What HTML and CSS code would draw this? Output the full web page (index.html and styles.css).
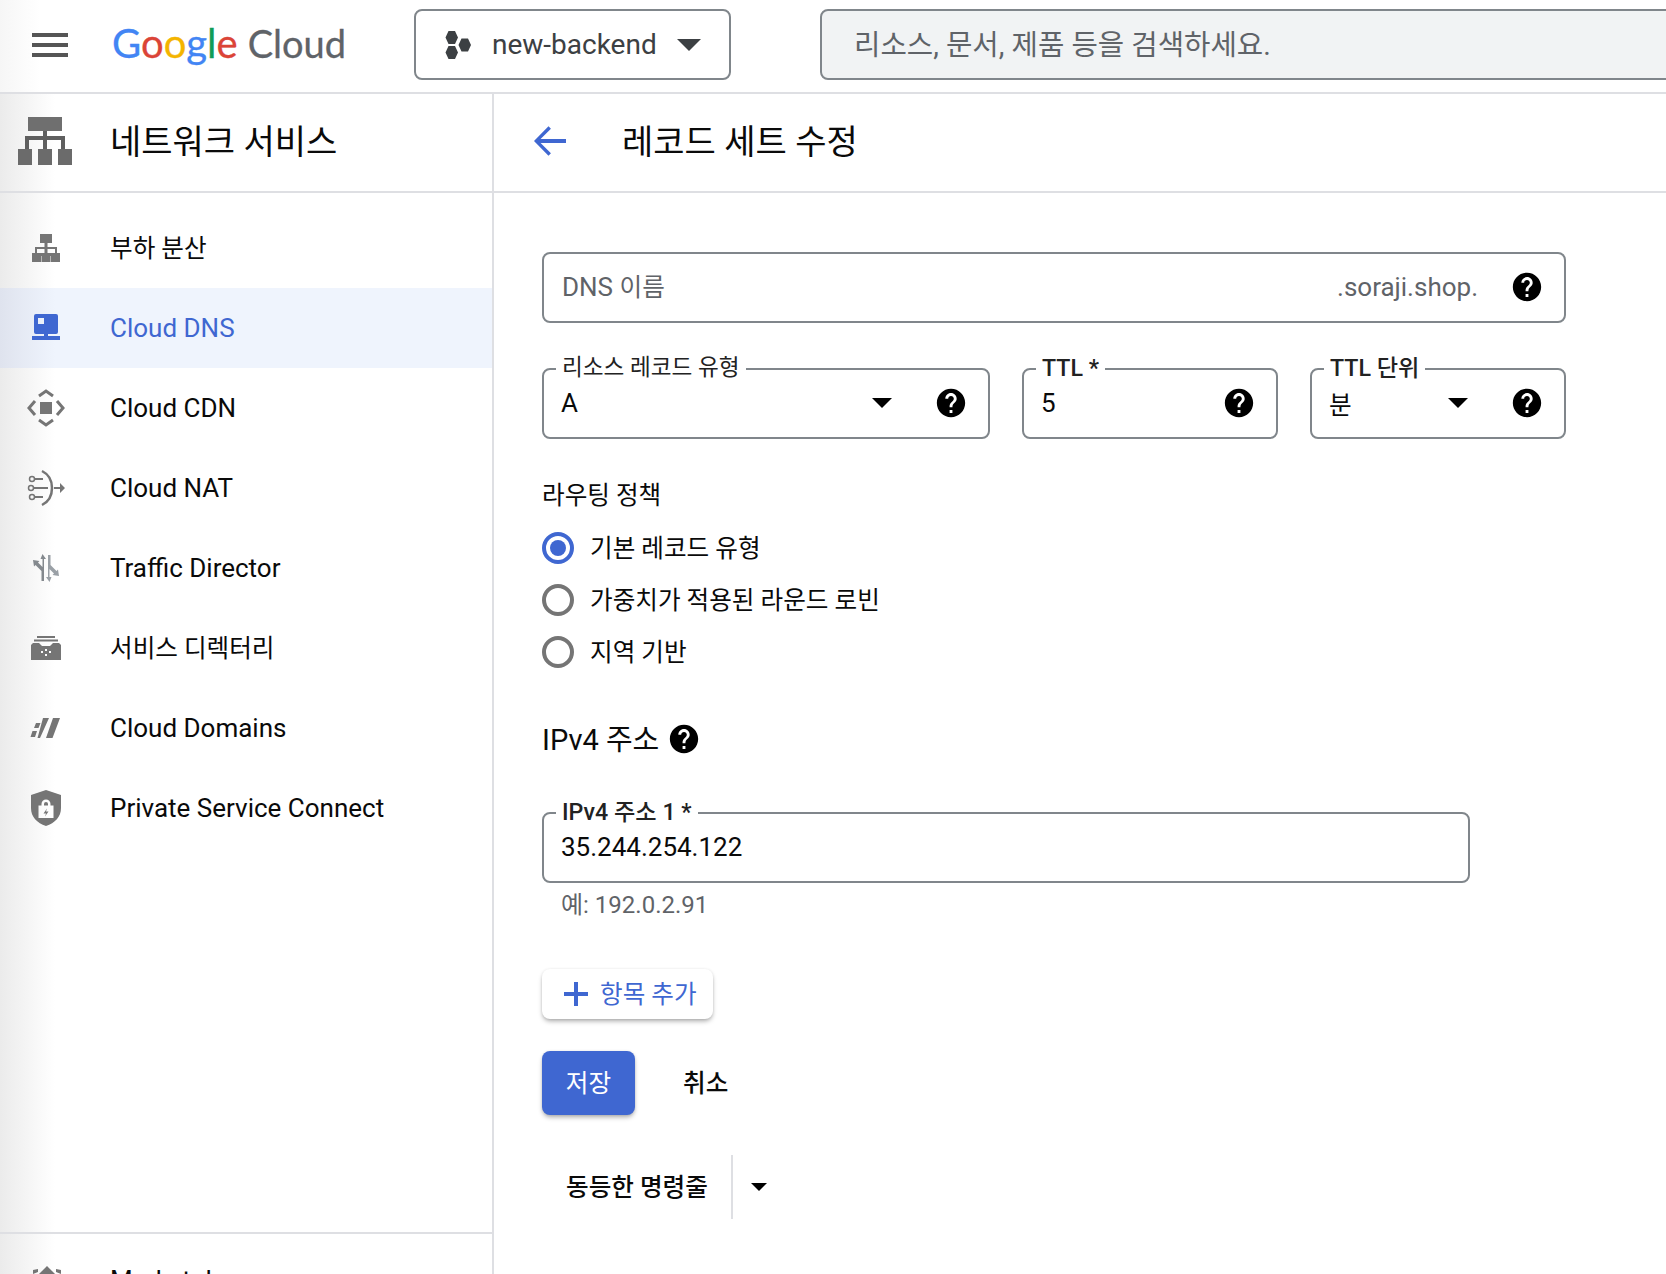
FILE: index.html
```html
<!DOCTYPE html>
<html lang="ko">
<head>
  <meta charset="UTF-8">
  <title>레코드 세트 수정</title>
  <link rel="stylesheet" href="styles.css">
</head>
<body>

  <svg class="defs" aria-hidden="true">
    <symbol id="help" viewBox="0 0 24 24"><path d="M12 2C6.48 2 2 6.48 2 12s4.48 10 10 10 10-4.48 10-10S17.52 2 12 2zm1 17h-2v-2h2v2zm2.07-7.75l-.9.92C13.45 12.9 13 13.5 13 15h-2v-.5c0-1.1.45-2.1 1.17-2.83l1.24-1.26c.37-.36.59-.86.59-1.41 0-1.1-.9-2-2-2s-2 .9-2 2H8c0-2.21 1.79-4 4-4s4 1.79 4 4c0 .88-.36 1.68-.93 2.25z"/></symbol>
  </svg>

  <!-- Top bar -->
  <header class="topbar">
    <svg class="menu-icon" viewBox="0 0 36 24"><path d="M0 0h36v4H0zM0 10h36v4H0zM0 20h36v4H0z"/></svg>
    <div class="logo"><span class="g-blue">G</span><span class="g-red">o</span><span class="g-yellow">o</span><span class="g-blue">g</span><span class="g-green">l</span><span class="g-red">e</span><span class="logo-cloud">Cloud</span></div>
    <div class="picker">
      <svg class="picker-icon" viewBox="0 0 27 28"><path d="M3.500 0h6.500l3 6.500-3 6.500H3.500L.500 6.500zM3.500 15h6.500l3 6.500-3 6.500H3.500L.500 21.500zM16.500 7.500h6.500l3 6.500-3 6.500h-6.500l-3-6.500z"/></svg>
      <span class="picker-name">new-backend</span>
      <span class="caret caret-lg"></span>
    </div>
    <div class="search">리소스, 문서, 제품 등을 검색하세요.</div>
  </header>

  <div class="layout">
    <!-- Left nav -->
    <aside class="sidebar">
      <div class="side-head">
        <svg class="side-head-icon" viewBox="0 0 54 48"><path d="M10 0h34v14H10z" fill="#6f6f6f"/><path d="M25 14h4v5h18v13h-4v-9H29v9h-4v-9H11v9H7V19h18z" fill="#5f5f5f"/><path d="M0 32h14v16H0zM20 32h14v16H20zM40 32h14v16H40z" fill="#6b6b6b"/></svg>
        <h1 class="side-title">네트워크 서비스</h1>
      </div>
      <nav class="side-nav">
        <a class="nav-item">
          <svg class="nav-icon" viewBox="0 0 40 40"><path d="M14 6h12v9h-4.500v4H31v6h3v9H24.500v-9H29v-4h-7.500v4H24v9h-8v-9h2.500v-4H11v4h4.500v9H6v-9h3v-6h9.500v-4H14z"/><path d="M15 25h10v3H15z"/></svg>
          <span class="ko">부하 분산</span>
        </a>
        <a class="nav-item active">
          <svg class="nav-icon" viewBox="0 0 40 40"><path fill-rule="evenodd" d="M10 6h20a2 2 0 0 1 2 2v16a2 2 0 0 1-2 2h-8v2h-4v-2h-8a2 2 0 0 1-2-2V8a2 2 0 0 1 2-2zm2 4v6h6v-6z"/><path d="M6 28h28v4H6z"/></svg>
          Cloud DNS
        </a>
        <a class="nav-item">
          <svg class="nav-icon" viewBox="0 0 40 40"><path d="M14 14h12v12H14z"/><path d="M9 13l-6 7 6 7M31 13l6 7-6 7M13 8l7-5 7 5M13 32l7 5 7-5" fill="none" stroke="#757575" stroke-width="3"/></svg>
          Cloud CDN
        </a>
        <a class="nav-item">
          <svg class="nav-icon" viewBox="0 0 40 40"><path d="M16 3c8 4 10 10 10 17s-2 13-10 17" fill="none" stroke="#757575" stroke-width="2.500"/><path d="M8 11h9M8 20h14M8 29h9" fill="none" stroke="#757575" stroke-width="2"/><circle cx="6" cy="11" r="2.500" fill="none" stroke="#757575" stroke-width="1.500"/><circle cx="5" cy="20" r="2.500" fill="none" stroke="#757575" stroke-width="1.500"/><circle cx="6" cy="29" r="2.500" fill="none" stroke="#757575" stroke-width="1.500"/><path d="M28 19h6v-4l5 5-5 5v-4h-6z"/></svg>
          Cloud NAT
        </a>
        <a class="nav-item">
          <svg class="nav-icon" viewBox="0 0 40 40"><path d="M16.500 6l3.500 5h-2v22h-2.500V23l-6-6-1.500 1.500-1-6.500 6.500 1-1.500 1.500 4.500 4.500V11h-2z" fill="#84898e"/><path d="M23.500 34l-3.500-5h2V7h2.500v10l6 6 1.500-1.500 1 6.500-6.500-1 1.500-1.500-4.500-4.500V29h2z" fill="#9aa0a6"/></svg>
          Traffic Director
        </a>
        <a class="nav-item">
          <svg class="nav-icon" viewBox="0 0 40 40"><path d="M11 8h18v2H11zM8 11.500h24v2H8z"/><path fill-rule="evenodd" d="M7 15h6l3 3h8l3-3h6l2 2v15H5V17zm12 6v2h2v-2zm-4 2v2h2v-2zm8 0v2h2v-2zm-4 3v2h2v-2z"/></svg>
          <span class="ko">서비스 디렉터리</span>
        </a>
        <a class="nav-item">
          <svg class="nav-icon" viewBox="0 0 40 40"><path d="M10 15h4.500l-2 5H8zM6.500 23H11l-2 6H4.500zM17 10h6l-9 20h-2.500zM27 10h7l-7.500 20H20z"/></svg>
          Cloud Domains
        </a>
        <a class="nav-item">
          <svg class="nav-icon" viewBox="0 0 40 40"><path fill-rule="evenodd" d="M20 2l15 5v13c0 9-6 15-15 18C11 35 5 29 5 20V7zm-4.500 14v1.500H12.500V30h15V17.500h-3V16a4.500 4.500 0 0 0-9 0zm2.500 0a2 2 0 0 1 4 0v1.500h-4zm3 4.500l-3.500 5h2.500l-1 3 3.500-5h-2.500z"/></svg>
          Private Service Connect
        </a>
      </nav>
      <div class="side-foot">
        <a class="nav-item nav-foot">
          <svg class="nav-icon" viewBox="0 0 40 40"><path d="M21 6l8 8H13zM7 10l5-1v3l-5 2zM35 10l-5-1v3l5 2z"/></svg>
          Marketplace
        </a>
      </div>
    </aside>

    <!-- Content -->
    <main class="content">
      <div class="page-head">
        <svg class="back-icon" viewBox="0 0 34 32"><path d="M34 14H7L18 3l-2.600-2.600L0 16l15.400 15.600L18 29 7 18h27z"/></svg>
        <h1 class="page-title">레코드 세트 수정</h1>
      </div>

      <form class="form">
        <div class="field">
          <span class="placeholder">DNS <span class="ko-inline">이름</span></span>
          <span class="suffix">.soraji.shop.</span>
          <svg class="help"><use href="#help"/></svg>
        </div>

        <div class="field-row">
          <div class="field field-type">
            <span class="float-label">리소스 레코드 유형</span>
            <span class="value">A</span>
            <span class="caret caret-field"></span>
            <svg class="help"><use href="#help"/></svg>
          </div>
          <div class="field field-ttl">
            <span class="float-label label-strong">TTL *</span>
            <span class="value">5</span>
            <svg class="help"><use href="#help"/></svg>
          </div>
          <div class="field field-unit">
            <span class="float-label label-strong">TTL 단위</span>
            <span class="value ko-inline">분</span>
            <span class="caret caret-field"></span>
            <svg class="help"><use href="#help"/></svg>
          </div>
        </div>

        <div class="group-title">라우팅 정책</div>
        <div class="radios">
          <div class="radio-row"><span class="radio checked"></span><span class="ko">기본 레코드 유형</span></div>
          <div class="radio-row"><span class="radio"></span><span class="ko">가중치가 적용된 라운드 로빈</span></div>
          <div class="radio-row"><span class="radio"></span><span class="ko">지역 기반</span></div>
        </div>

        <div class="section-title"><span class="section-text">IPv4 주소</span> <svg class="help"><use href="#help"/></svg></div>

        <div class="field field-ip">
          <span class="float-label label-strong">IPv4 주소 1 *</span>
          <span class="value">35.244.254.122</span>
        </div>
        <div class="hint">예: 192.0.2.91</div>

        <button type="button" class="btn-add">
          <svg class="plus-icon" viewBox="0 0 24 24"><path d="M10 0h4v10h10v4H14v10h-4V14H0v-4h10z"/></svg>
          <span class="ko">항목 추가</span>
        </button>

        <div class="actions">
          <button type="button" class="btn-save"><span class="ko">저장</span></button>
          <button type="button" class="btn-cancel"><span class="ko">취소</span></button>
        </div>

        <div class="command">
          <span class="ko">동등한 명령줄</span>
          <span class="command-sep"></span>
          <span class="caret caret-sm"></span>
        </div>
      </form>
    </main>
  </div>

</body>
</html>
```

FILE: styles.css
```css
:root {
  --blue: #3f67d1;
  --line: #dedfe3;
  --outline: #80868b;
  --grey: #5f6368;
  --icon: #757575;
  --text: #0a0a0a;
}
* {
  box-sizing: border-box;
}
html, body {
  margin: 0;
  height: 1274px;
  overflow: hidden;
}
body {
  background: #fff;
  color: var(--text);
  font-family: Roboto, "Noto Sans CJK KR", sans-serif;
  font-size: 26px;
}
h1 {
  margin: 0;
  font-size: 34px;
  font-weight: 400;
}
.defs {
  display: none;
}
/* korean text runs a bit narrower and sits higher than the latin */
.ko {
  display: block;
  padding-bottom: 4px;
  font-size: 24.6px;
}
.ko-inline {
  font-size: 24.6px;
}

/* top bar */
.topbar {
  display: flex;
  align-items: center;
  height: 94px;
  padding: 0 0 3px 32px;
  border-bottom: 2px solid var(--line);
  background: linear-gradient(90deg, #f6f6f6, #fff 40px);
  overflow: hidden;
}
.menu-icon {
  width: 36px;
  height: 24px;
  fill: #555;
  flex: none;
}
.logo {
  width: 302px;
  margin: 0 0 3px 44px;
  font-family: Lato, sans-serif;
  font-size: 40px;
  -webkit-text-stroke: 0.3px;
  white-space: nowrap;
  flex: none;
}
.g-blue { color: #4285f4; }
.g-red { color: #db4437; }
.g-yellow { color: #f4b400; }
.g-green { color: #0f9d58; }
.logo-cloud {
  margin-left: 10px;
  font-size: 38px;
  color: #5f6368;
}
.picker {
  display: flex;
  align-items: center;
  width: 317px;
  height: 71px;
  padding-left: 29px;
  border: 2px solid var(--outline);
  border-radius: 8px;
  flex: none;
}
.picker-icon {
  width: 27px;
  height: 28px;
  fill: #3c4043;
  flex: none;
}
.picker-name {
  margin-left: 20px;
  font-size: 28px;
  color: #3c4043;
}
.caret {
  display: block;
  border-style: solid;
  border-color: transparent;
  border-bottom-width: 0;
  flex: none;
}
.caret-lg {
  margin-left: 20px;
  border-width: 12px 12px 0;
  border-top-color: #3c4043;
}
.search {
  flex: 1;
  height: 71px;
  margin: 0 -10px 0 89px;
  padding: 0 32px;
  line-height: 68px;
  border: 2px solid var(--outline);
  border-radius: 8px;
  background: #f1f3f4;
  color: var(--grey);
  font-size: 28.7px;
}

/* layout */
.layout {
  display: flex;
  height: 1180px;
}
.sidebar {
  display: flex;
  flex-direction: column;
  width: 494px;
  border-right: 2px solid var(--line);
  background: linear-gradient(90deg, #ebebeb, #fff 55px);
  flex: none;
}
.side-head {
  display: flex;
  align-items: center;
  height: 99px;
  padding: 0 0 4px 18px;
  border-bottom: 2px solid var(--line);
}
.side-head-icon {
  width: 54px;
  height: 48px;
}
.side-title {
  margin: 0 0 2px 38px;
}
.side-nav {
  flex: 1;
  padding-top: 15px;
}
.nav-item {
  display: flex;
  align-items: center;
  height: 80px;
  padding-left: 26px;
  white-space: nowrap;
}
.nav-icon {
  width: 40px;
  height: 40px;
  margin-right: 44px;
  fill: var(--icon);
  flex: none;
}
.nav-item.active {
  background: linear-gradient(90deg, #dfe3ee, #eff4fd 55px);
  color: var(--blue);
}
.active .nav-icon {
  fill: var(--blue);
}
.side-foot {
  height: 42px;
  border-top: 2px solid var(--line);
  padding-top: 26px;
  overflow: hidden;
}
.nav-foot {
  height: 40px;
}

/* content */
.content {
  flex: 1;
  min-width: 0;
}
.page-head {
  display: flex;
  align-items: center;
  height: 99px;
  padding: 0 0 4px 40px;
  border-bottom: 2px solid var(--line);
}
.back-icon {
  width: 32px;
  height: 32px;
  fill: var(--blue);
}
.page-title {
  margin: 0 0 2px 56px;
}
.form {
  width: 1072px;
  padding: 59px 0 0 48px;
}
.field {
  position: relative;
  display: flex;
  align-items: center;
  height: 71px;
  padding: 0 20px 2px 17px;
  border: 2px solid var(--outline);
  border-radius: 8px;
}
.placeholder {
  flex: 1;
  padding: 0 0 3px 1px;
  color: var(--grey);
}
.suffix {
  margin-right: 32px;
  color: var(--grey);
}
.value {
  flex: 1;
}
.help {
  width: 34px;
  height: 34px;
  fill: #000;
  flex: none;
}
.field-row {
  display: flex;
  gap: 32px;
  margin-top: 45px;
}
.field-type { width: 448px; }
.field-ttl { width: 256px; }
.field-unit { width: 256px; }
.float-label {
  position: absolute;
  top: -17px;
  left: 12px;
  padding: 0 6px;
  background: #fff;
  font-size: 22.6px;
  line-height: 30px;
  color: #222;
}
.label-strong {
  font-size: 23.2px;
  font-weight: 500;
}
.caret-field {
  margin-right: 42px;
  border-width: 10px 10px 0;
  border-top-color: #000;
}
.group-title {
  margin-top: 39px;
  line-height: 36px;
  font-size: 24.6px;
}
.radios {
  margin-top: 8px;
}
.radio-row {
  display: flex;
  align-items: center;
  gap: 16px;
  height: 52px;
}
.radio {
  width: 32px;
  height: 32px;
  padding: 4px;
  border: 4px solid var(--icon);
  border-radius: 50%;
  flex: none;
}
.radio.checked {
  border-color: var(--blue);
}
.radio.checked::after {
  content: '';
  display: block;
  width: 16px;
  height: 16px;
  border-radius: 50%;
  background: var(--blue);
}
.section-title {
  display: flex;
  align-items: center;
  gap: 8px;
  height: 40px;
  margin-top: 41px;
  font-size: 29px;
}
.section-text {
  padding-bottom: 4px;
}
.field-ip {
  width: 928px;
  margin-top: 53px;
}
.hint {
  margin: 7px 0 0 19px;
  line-height: 30px;
  font-size: 24px;
  color: var(--grey);
}
button {
  font: inherit;
  border: none;
  cursor: pointer;
}
.btn-add {
  display: flex;
  align-items: center;
  gap: 12px;
  height: 50px;
  margin-top: 49px;
  padding: 0 16px 0 22px;
  border-radius: 8px;
  background: #fff;
  color: var(--blue);
  box-shadow: 0 3px 5px -1px rgba(0,0,0,0.35), 0 0 3px rgba(0,0,0,0.08);
}
.plus-icon {
  width: 24px;
  height: 24px;
  fill: var(--blue);
}
.actions {
  display: flex;
  align-items: center;
  margin-top: 32px;
}
.btn-save {
  width: 93px;
  height: 64px;
  border-radius: 8px;
  background: var(--blue);
  color: #fff;
  box-shadow: 0 3px 5px -1px rgba(0,0,0,0.35), 0 0 3px rgba(0,0,0,0.08);
}
.btn-cancel {
  margin-left: 48px;
  padding: 0;
  background: none;
  color: var(--text);
  font-weight: 500;
}
.command {
  display: flex;
  align-items: center;
  height: 64px;
  margin-top: 40px;
  padding-left: 24px;
  font-weight: 500;
}
.command-sep {
  width: 2px;
  height: 64px;
  margin: 0 18px 0 23px;
  background: var(--line);
}
.caret-sm {
  border-width: 8px 8px 0;
  border-top-color: #000;
}
```
